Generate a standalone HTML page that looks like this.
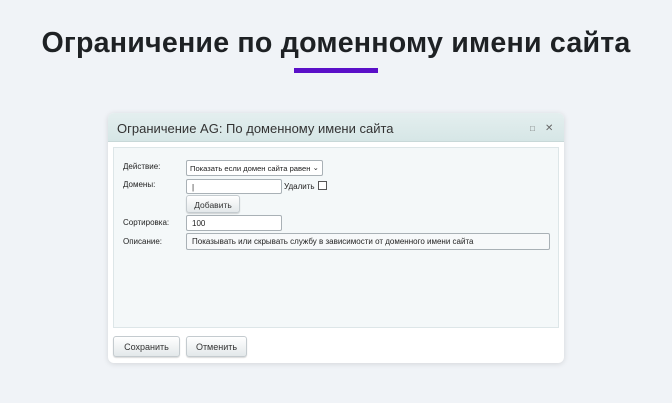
<!DOCTYPE html>
<html><head><meta charset="utf-8"><style>
*{margin:0;padding:0;box-sizing:border-box}
body{width:672px;height:403px;background:#f0f3f7;font-family:"Liberation Sans",Arial,sans-serif;position:relative;overflow:hidden}
h1{position:absolute;left:0;width:672px;top:27px;text-align:center;font-size:28.6px;font-weight:bold;color:#1e2124;letter-spacing:0.2px}
.bar{position:absolute;left:294px;top:68px;width:84px;height:5px;background:#5a0fc8}
.dlg{position:absolute;left:108px;top:113px;width:456px;height:250px;background:#fff;border-radius:6px;box-shadow:0 1px 6px rgba(0,0,0,.12)}
.hd{height:29px;background:linear-gradient(#e4efef,#d6e6e6);border-radius:6px 6px 0 0;border-bottom:1px solid #c8d8d8;font-size:13px;color:#333;padding:8px 0 0 9px}
.ic{position:absolute;top:10px;font-size:10px;color:#666}
.panel{position:absolute;left:5px;top:34px;width:446px;height:181px;background:#f4f8f9;border:1px solid #dde6e8}
.l{position:absolute;font-size:8px;color:#222}
.in{position:absolute;background:#fff;border:1px solid #a9b1b6;border-radius:2px;font-size:8px;color:#222;padding:3px 0 0 5px;height:16px;white-space:nowrap;overflow:hidden}
.btn{position:absolute;background:linear-gradient(#fff,#e3e8ea);border:1px solid #c4cbcf;border-radius:3px;font-size:9px;color:#333;text-align:center;box-shadow:0 1px 1px rgba(0,0,0,.15)}
</style></head><body>
<h1>Ограничение по доменному имени сайта</h1>
<div class="bar"></div>
<div class="dlg">
<div class="hd">Ограничение AG: По доменному имени сайта</div>
<div class="ic" style="left:422px;font-size:8px;top:11px">□</div>
<div class="ic" style="left:437px">✕</div>
<div class="panel">
<div class="l" style="left:9px;top:14px">Действие:</div>
<div class="in" style="left:72px;top:12px;width:137px;height:16px;padding:3px 0 0 3px;font-size:7.6px">Показать если домен сайта равен<span style="position:absolute;right:3px;top:2px;background:#fff;padding-left:2px">⌄</span></div>
<div class="l" style="left:9px;top:32px">Домены:</div>
<div class="in" style="left:72px;top:31px;width:96px;height:15px">|</div>
<div class="l" style="left:170px;top:34px">Удалить</div>
<div style="position:absolute;left:204px;top:33px;width:9px;height:9px;border:1px solid #555;background:#fff"></div>
<div class="btn" style="left:72px;top:47px;width:54px;height:18px;padding-top:4px;font-size:8.5px">Добавить</div>
<div class="l" style="left:9px;top:70px">Сортировка:</div>
<div class="in" style="left:72px;top:67px;width:96px;height:16px">100</div>
<div class="l" style="left:9px;top:89px">Описание:</div>
<div class="in" style="left:72px;top:85px;width:364px;height:17px;background:#f7f9fa">Показывать или скрывать службу в зависимости от доменного имени сайта</div>
</div>
<div class="btn" style="left:5px;top:223px;width:67px;height:21px;padding-top:5px">Сохранить</div>
<div class="btn" style="left:78px;top:223px;width:61px;height:21px;padding-top:5px">Отменить</div>
</div>
</body></html>
